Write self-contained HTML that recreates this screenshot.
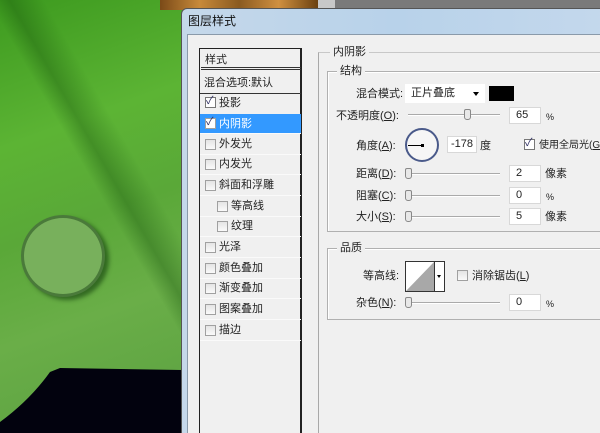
<!DOCTYPE html>
<html><head><meta charset="utf-8"><style>
*{margin:0;padding:0;box-sizing:border-box}
html,body{width:600px;height:433px;overflow:hidden}
body{position:relative;font-family:"Liberation Sans","Noto Sans CJK SC",sans-serif;font-size:11px;color:#222;background:#4a9a2a}
.a{position:absolute}
.t{position:absolute;white-space:nowrap;line-height:12px}
.cb{position:absolute;width:11px;height:11px;border:1px solid #a0a0a0;background:linear-gradient(#e4e4e4,#fafafa)}
.in{position:absolute;background:#fff;border:1px solid #d8d8d8;height:17px;padding-left:6px;line-height:15px}
.sl{position:absolute;height:2px;border-top:1px solid #aaa;border-bottom:1px solid #fff}
.th{position:absolute;width:7px;height:11px;border:1px solid #888;border-radius:2px 2px 3px 3px;background:#e8e8e8}
.row{position:absolute;left:1px;width:100px;height:20px;border-bottom:1px solid #fafafa}
</style></head><body>
<div class="a" style="left:0;top:0;width:182px;height:433px;background:linear-gradient(160deg,#3d9a1f 0%,#5cb434 30%,#5aa838 50%,#6aae48 70%,#5aa040 100%)"></div>
<div class="a" style="left:0;top:0;width:182px;height:433px;background:linear-gradient(60deg,transparent 55%,rgba(20,80,10,.35) 60%,transparent 68%)"></div>
<div class="a" style="left:21px;top:215px;width:84px;height:82px;border-radius:50%;background:#78b05c;border:3px solid #4a7a3a;box-shadow:4px 3px 4px rgba(0,40,0,.5)"></div>
<svg class="a" style="left:0;top:360px" width="182" height="73"><path d="M0 62 Q30 40 50 12 L60 8 L182 10 L182 73 L0 73Z" fill="#02020e"/></svg>
<div class="a" style="left:160px;top:0;width:158px;height:10px;background:linear-gradient(90deg,#7a4a18,#c88a3a,#8a5a20,#d09040,#6a4010)"></div>
<div class="a" style="left:318px;top:0;width:17px;height:10px;background:#c8c8c8"></div>
<div class="a" style="left:335px;top:0;width:265px;height:10px;background:#7a7a7a"></div>
<div class="a" style="left:181px;top:8px;width:430px;height:430px;background:linear-gradient(90deg,#c5d8ea,#b8d2ea 50%,#c4d8ec);border:1px solid #555;border-radius:6px 6px 0 0"></div>
<div class="t" style="left:188px;top:15px;font-size:12px;color:#111">图层样式</div>
<div class="a" style="left:187px;top:34px;width:420px;height:410px;background:#f0f0f0;border:1px solid #8a9aaa"></div>
<!-- list -->
<div class="a" style="left:199px;top:48px;width:103px;height:400px;border:1px solid #222;border-right-width:2px;background:#f0f0f0">
<div class="row" style="top:0;height:21px;border-bottom:3px double #333"></div>
<div class="t" style="left:5px;top:5px">样式</div>
<div class="t" style="left:4px;top:28px">混合选项:默认</div>
<div class="a" style="left:0;top:44px;width:101px;height:1px;background:#333"></div>
<div class="cb" style="left:5px;top:48px;border-color:#777;background:#fff"></div><div class="t" style="left:6px;top:46px;color:#336">✓</div><div class="t" style="left:19px;top:48px">投影</div>
<div class="a" style="left:0;top:65px;width:101px;height:20px;background:#3399ff"></div>
<div class="cb" style="left:5px;top:69px;background:#fff"></div><div class="t" style="left:6px;top:67px;color:#336">✓</div><div class="t" style="left:19px;top:69px;color:#fff">内阴影</div>
<div class="cb" style="left:5px;top:90px"></div><div class="t" style="left:19px;top:89px">外发光</div>
<div class="cb" style="left:5px;top:110px"></div><div class="t" style="left:19px;top:109px">内发光</div>
<div class="cb" style="left:5px;top:131px"></div><div class="t" style="left:19px;top:130px">斜面和浮雕</div>
<div class="cb" style="left:17px;top:152px"></div><div class="t" style="left:31px;top:151px">等高线</div>
<div class="cb" style="left:17px;top:172px"></div><div class="t" style="left:31px;top:171px">纹理</div>
<div class="cb" style="left:5px;top:193px"></div><div class="t" style="left:19px;top:192px">光泽</div>
<div class="cb" style="left:5px;top:214px"></div><div class="t" style="left:19px;top:213px">颜色叠加</div>
<div class="cb" style="left:5px;top:234px"></div><div class="t" style="left:19px;top:233px">渐变叠加</div>
<div class="cb" style="left:5px;top:255px"></div><div class="t" style="left:19px;top:254px">图案叠加</div>
<div class="cb" style="left:5px;top:276px"></div><div class="t" style="left:19px;top:275px">描边</div>
<div class="a" style="left:0;top:84px;width:101px;height:1px;background:#fafafa"></div>
<div class="a" style="left:0;top:105px;width:101px;height:1px;background:#fafafa"></div>
<div class="a" style="left:0;top:125px;width:101px;height:1px;background:#fafafa"></div>
<div class="a" style="left:0;top:146px;width:101px;height:1px;background:#fafafa"></div>
<div class="a" style="left:0;top:167px;width:101px;height:1px;background:#fafafa"></div>
<div class="a" style="left:0;top:187px;width:101px;height:1px;background:#fafafa"></div>
<div class="a" style="left:0;top:208px;width:101px;height:1px;background:#fafafa"></div>
<div class="a" style="left:0;top:229px;width:101px;height:1px;background:#fafafa"></div>
<div class="a" style="left:0;top:249px;width:101px;height:1px;background:#fafafa"></div>
<div class="a" style="left:0;top:270px;width:101px;height:1px;background:#fafafa"></div>
<div class="a" style="left:0;top:291px;width:101px;height:1px;background:#fafafa"></div>
</div>
<!-- outer group -->
<div class="a" style="left:318px;top:52px;width:300px;height:400px;border-left:1px solid #a8a8a8;border-top:1px solid #c8c8c8"></div>
<div class="t" style="left:330px;top:46px;background:#f0f0f0;padding:0 3px">内阴影</div>
<div class="a" style="left:327px;top:71px;width:290px;height:161px;border:1px solid #b0b0b0;box-shadow:inset 1px 1px #fff"></div>
<div class="t" style="left:337px;top:65px;background:#f0f0f0;padding:0 3px">结构</div>
<div class="t" style="left:356px;top:88px">混合模式:</div>
<div class="a" style="left:405px;top:84px;width:80px;height:19px;background:#fff"></div>
<div class="t" style="left:411px;top:87px">正片叠底</div>
<div class="a" style="left:473px;top:92px;border:3px solid transparent;border-top:4px solid #000"></div>
<div class="a" style="left:489px;top:86px;width:25px;height:15px;background:#000"></div>
<div class="t" style="left:336px;top:110px">不透明度(<u>O</u>):</div>
<div class="sl" style="left:408px;top:114px;width:92px"></div>
<div class="th" style="left:464px;top:109px"></div>
<div class="in" style="left:509px;top:107px;width:32px">65</div>
<div class="t" style="left:546px;top:111px;font-size:9px">%</div>
<div class="t" style="left:356px;top:140px">角度(<u>A</u>):</div>
<div class="a" style="left:405px;top:128px;width:34px;height:34px;border-radius:50%;border:2px solid #4a5a8a;background:#f6f6f6"></div>
<div class="a" style="left:408px;top:145px;width:15px;height:1px;background:#000"></div>
<div class="a" style="left:421px;top:144px;width:3px;height:3px;background:#000"></div>
<div class="in" style="left:447px;top:136px;width:30px;padding-left:3px">-178</div>
<div class="t" style="left:480px;top:140px">度</div>
<div class="cb" style="left:524px;top:139px;border-color:#777;background:#fff"></div><div class="t" style="left:525px;top:137px;color:#336">✓</div>
<div class="t" style="left:539px;top:140px;font-size:10px">使用全局光(<u>G</u>)</div>
<div class="t" style="left:356px;top:168px">距离(<u>D</u>):</div>
<div class="sl" style="left:408px;top:173px;width:92px"></div><div class="th" style="left:405px;top:168px"></div>
<div class="in" style="left:509px;top:165px;width:32px">2</div><div class="t" style="left:545px;top:168px">像素</div>
<div class="t" style="left:356px;top:190px">阻塞(<u>C</u>):</div>
<div class="sl" style="left:408px;top:195px;width:92px"></div><div class="th" style="left:405px;top:190px"></div>
<div class="in" style="left:509px;top:187px;width:32px">0</div><div class="t" style="left:546px;top:191px;font-size:9px">%</div>
<div class="t" style="left:356px;top:211px">大小(<u>S</u>):</div>
<div class="sl" style="left:408px;top:216px;width:92px"></div><div class="th" style="left:405px;top:211px"></div>
<div class="in" style="left:509px;top:208px;width:32px">5</div><div class="t" style="left:545px;top:211px">像素</div>
<!-- quality -->
<div class="a" style="left:327px;top:248px;width:290px;height:72px;border:1px solid #b0b0b0;box-shadow:inset 1px 1px #fff"></div>
<div class="t" style="left:337px;top:242px;background:#f0f0f0;padding:0 3px">品质</div>
<div class="t" style="left:363px;top:270px">等高线:</div>
<div class="a" style="left:405px;top:261px;width:40px;height:31px;border:1px solid #333;background:#fff"></div>
<svg class="a" style="left:406px;top:262px" width="28" height="29"><path d="M0 29 L28 0 L28 29Z" fill="#a8a8a8"/></svg>
<div class="a" style="left:434px;top:262px;width:1px;height:29px;background:#333"></div>
<div class="a" style="left:437px;top:275px;border:2px solid transparent;border-top:3px solid #000"></div>
<div class="cb" style="left:457px;top:270px"></div>
<div class="t" style="left:472px;top:270px">消除锯齿(<u>L</u>)</div>
<div class="t" style="left:356px;top:297px">杂色(<u>N</u>):</div>
<div class="sl" style="left:408px;top:302px;width:92px"></div><div class="th" style="left:405px;top:297px"></div>
<div class="in" style="left:509px;top:294px;width:32px">0</div><div class="t" style="left:546px;top:298px;font-size:9px">%</div>
</body></html>
